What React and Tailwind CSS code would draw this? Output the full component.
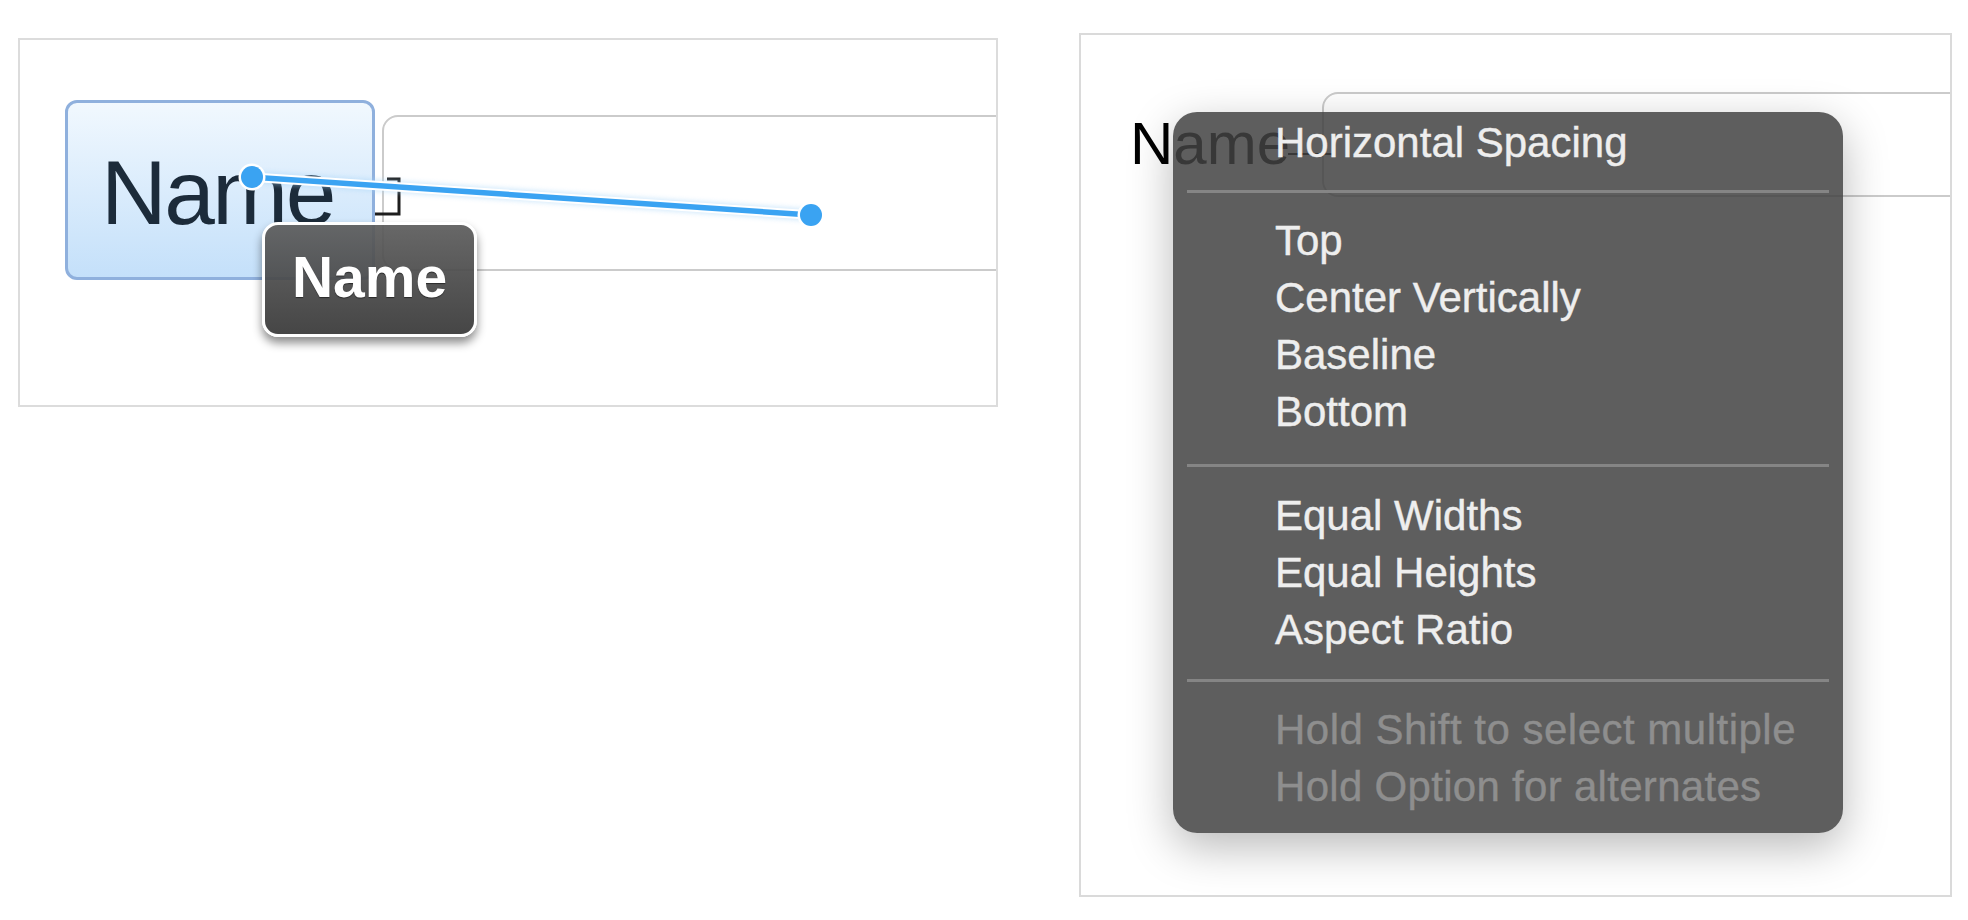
export default function App() {
  return (
    <div className="w-[1968px] h-[920px] bg-white flex items-start overflow-hidden font-['Liberation_Sans',Arial,Helvetica,sans-serif]">
      {/* Left panel */}
      <div className="relative ml-[18px] mt-[38px] w-[980px] h-[369px] shrink-0 border-2 border-[#dcdcdc] overflow-hidden flex items-start pl-[45px] pt-[60px]">
        <div className="w-[310px] h-[180px] shrink-0 rounded-[12px] border-[3px] border-[#8fb0dd] bg-linear-to-b from-[#f1f8fe] to-[#c4e0fa] flex items-center pl-[33px] pt-[5px] text-[91px] leading-none tracking-[-2.5px] text-[#1c2b3a]">
          Name
        </div>
        <div className="ml-[7px] mt-[15px] h-[156px] w-[700px] shrink-0 rounded-l-[16px] border-2 border-[#cbcbcb] bg-white" />

        {/* corner bracket */}
        <svg className="absolute left-[354px] top-[136px]" width="28" height="42" viewBox="0 0 28 42">
          <path d="M13 3 H25 V38 H1" fill="none" stroke="#1e1e1e" strokeWidth="3" />
        </svg>

        {/* blue connection line */}
        <svg className="absolute left-0 top-0" width="976" height="365" viewBox="0 0 976 365">
          <defs>
            <filter id="halo" x="-20%" y="-200%" width="140%" height="500%">
              <feGaussianBlur stdDeviation="2.5" />
            </filter>
          </defs>
          <line x1="232" y1="137" x2="791" y2="175" stroke="#9fd0f7" strokeWidth="12" strokeLinecap="round" opacity="0.45" filter="url(#halo)" />
          <line x1="232" y1="137" x2="791" y2="175" stroke="#ffffff" strokeWidth="9.5" strokeLinecap="round" />
          <line x1="232" y1="137" x2="791" y2="175" stroke="#3aa3f2" strokeWidth="5.5" strokeLinecap="round" />
          <circle cx="232" cy="137" r="13.5" fill="#ffffff" />
          <circle cx="232" cy="137" r="11" fill="#3aa3f2" />
          <circle cx="791" cy="175" r="13.5" fill="#ffffff" />
          <circle cx="791" cy="175" r="11" fill="#3aa3f2" />
        </svg>

        {/* tooltip */}
        <div className="absolute left-[242px] top-[182px] w-[215px] h-[115px] rounded-[16px] border-[3px] border-white bg-linear-to-b from-[rgba(92,92,92,0.93)] to-[rgba(56,56,56,0.93)] shadow-[0_6px_10px_rgba(0,0,0,0.45)] flex items-center justify-center pb-[4px] text-white font-bold text-[57px] leading-none [text-shadow:0_1px_1px_rgba(0,0,0,0.5)]">
          Name
        </div>
      </div>

      {/* Right panel */}
      <div className="relative ml-[81px] mt-[33px] w-[873px] h-[864px] shrink-0 border-2 border-[#dadada] overflow-hidden flex items-start pl-[49px]">
        <div className="w-[192px] shrink-0 mt-[79px] text-[60px] leading-none text-black">Name</div>
        <div className="mt-[57px] h-[105px] w-[700px] shrink-0 rounded-l-[16px] border-2 border-[#cbcbcb] bg-white" />

        {/* cursor dash */}
        <div className="absolute left-[207px] top-[118px] w-[45px] h-[2px] bg-black" />

        {/* menu */}
        <div className="absolute left-[92px] top-[77px] w-[670px] rounded-[24px] bg-[rgba(66,66,66,0.85)] shadow-[0_14px_45px_rgba(0,0,0,0.28)] pl-[102px] pt-[4px] pb-[18px] text-[42px] leading-[57px] text-[#eeeeee] whitespace-nowrap [-webkit-text-stroke:0.4px_currentColor]">
          <div className="leading-[53px]">Horizontal Spacing</div>
          <div className="-ml-[88px] w-[642px] h-[3px] mt-[21px] mb-[19px] bg-[#858585]" />
          <div>Top</div>
          <div>Center Vertically</div>
          <div>Baseline</div>
          <div>Bottom</div>
          <div className="-ml-[88px] w-[642px] h-[3px] mt-[24px] mb-[20px] bg-[#858585]" />
          <div>Equal Widths</div>
          <div>Equal Heights</div>
          <div>Aspect Ratio</div>
          <div className="-ml-[88px] w-[642px] h-[3px] mt-[21px] mb-[19px] bg-[#858585]" />
          <div className="text-[#8e8e8e] tracking-[0.5px]">Hold Shift to select multiple</div>
          <div className="text-[#8e8e8e] tracking-[0.3px]">Hold Option for alternates</div>
        </div>
      </div>
    </div>
  );
}
